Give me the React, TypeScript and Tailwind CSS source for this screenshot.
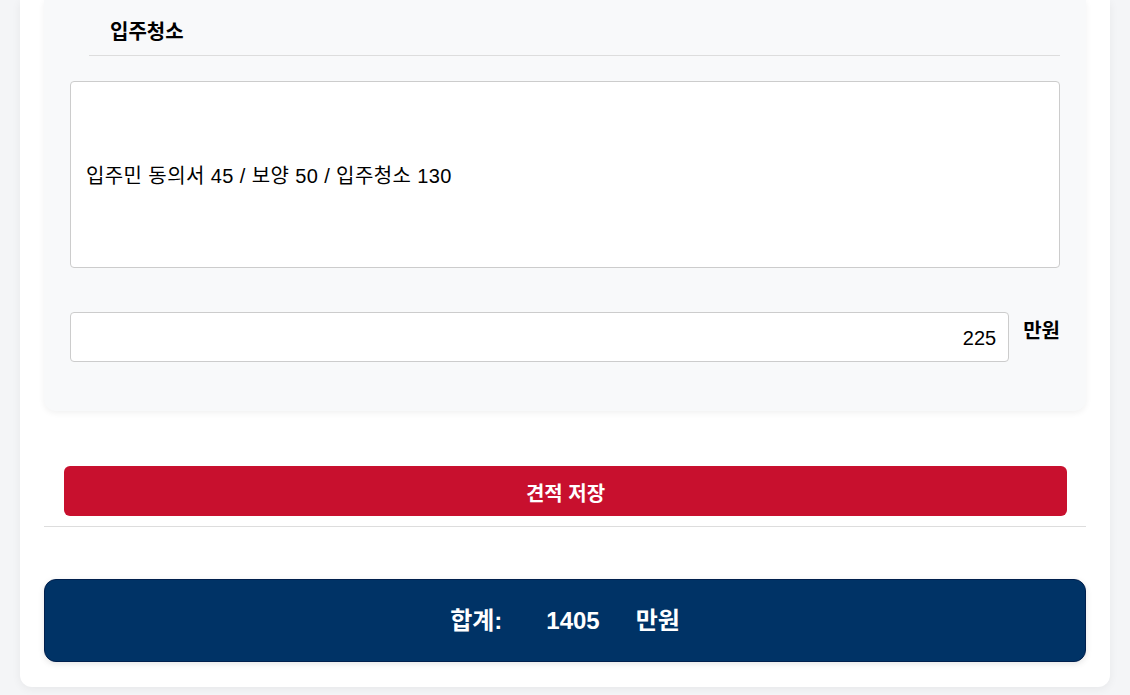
export default function App() {
  const font = { fontFamily: '"Liberation Sans", "Noto Sans CJK KR", sans-serif' };
  return (
    <div className="min-h-screen bg-[#f4f5f7] px-5 pb-2" style={font}>
      <div className="rounded-b-xl bg-white px-6 pb-[25px] shadow-[0_2px_10px_rgba(0,0,0,0.06)]">
        <div className="rounded-b-xl bg-[#f8f9fa] px-[26px] pb-[49px] shadow-[0_2px_6px_rgba(0,0,0,0.06)]">
          <div className="ml-[19px] border-b border-[#dddddd] pl-[21px] pt-[19px] pb-[10px]">
            <h3 className="text-[20px] font-bold leading-[26px] text-black">입주청소</h3>
          </div>

          <div className="mt-[25px] flex h-[187px] items-center rounded border border-[#cccccc] bg-white px-[15px] pt-[2px] text-[20px] tracking-[0.4px] text-black">
            입주민 동의서 45 / 보양 50 / 입주청소 130
          </div>

          <div className="mt-[44px] flex items-center gap-[14px]">
            <input
              readOnly
              value="225"
              className="h-[50px] flex-1 rounded border border-[#cccccc] bg-white px-3 pt-[2px] text-right text-[20px] text-black outline-none"
            />
            <span className="-mt-[12px] text-[20px] font-bold text-black">만원</span>
          </div>
        </div>

        <button className="mx-[20px] mt-[55px] flex h-[50px] w-[calc(100%-39px)] items-center justify-center rounded-md bg-[#c8102e] pt-[6px] text-[20px] font-bold text-white">
          견적 저장
        </button>

        <hr className="mt-[10px] border-[#dddddd]" />

        <div className="mt-[52px] flex h-[83px] items-center justify-center gap-[44px] rounded-xl border border-[#001f4d] bg-[#003366] text-[24px] font-bold text-white shadow-[0_2px_6px_rgba(0,0,0,0.1)]">
          <span>합계:</span>
          <span>1405</span>
          <span className="-ml-[8px]">만원</span>
        </div>
      </div>
    </div>
  );
}
